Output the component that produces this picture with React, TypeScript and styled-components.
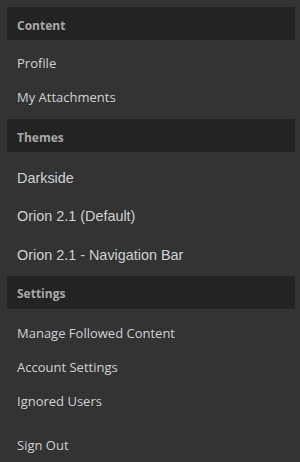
import React from "react";
import styled, { createGlobalStyle } from "styled-components";

const Global = createGlobalStyle`
  html, body { margin: 0; padding: 0; background: #333333; }
  body { width: 300px; height: 462px; overflow: hidden; }
`;

const Menu = styled.nav`
  box-sizing: border-box;
  width: 300px;
  height: 462px;
  padding: 7px 5px 0 7px;
  background: #333333;
  display: flex;
  flex-direction: column;
`;

const Header = styled.div`
  box-sizing: border-box;
  height: 34px;
  display: flex;
  align-items: center;
  padding: 3px 0 0 10px;
  background: #232323;
  color: #a9a9a9;
  font-family: "Open Sans", sans-serif;
  font-weight: 700;
  font-size: 12px;
`;

const List = styled.ul<{ $top: number; $bottom: number }>`
  list-style: none;
  margin: 0;
  padding: ${(p) => p.$top}px 0 ${(p) => p.$bottom}px;
  display: flex;
  flex-direction: column;
`;

const Item = styled.li<{ $theme?: boolean }>`
  height: ${(p) => (p.$theme ? 38.5 : 34)}px;
  display: flex;
  align-items: center;
  padding-left: 10px;
  color: #cfd2d6;
  font-family: ${(p) => (p.$theme ? `"Liberation Sans", Arial, sans-serif` : `"Open Sans", sans-serif`)};
  font-size: ${(p) => (p.$theme ? 14.4 : 13)}px;
  cursor: pointer;
`;

const Separator = styled.li`
  height: 10px;
`;

export default function App() {
  return (
    <>
      <Global />
      <Menu>
        <Header>Content</Header>
        <List $top={6} $bottom={5}>
          <Item>Profile</Item>
          <Item>My Attachments</Item>
        </List>
        <Header>Themes</Header>
        <List $top={6} $bottom={2}>
          <Item $theme>Darkside</Item>
          <Item $theme>Orion 2.1 (Default)</Item>
          <Item $theme>Orion 2.1 - Navigation Bar</Item>
        </List>
        <Header>Settings</Header>
        <List $top={7} $bottom={0}>
          <Item>Manage Followed Content</Item>
          <Item>Account Settings</Item>
          <Item>Ignored Users</Item>
          <Separator />
          <Item>Sign Out</Item>
        </List>
      </Menu>
    </>
  );
}
